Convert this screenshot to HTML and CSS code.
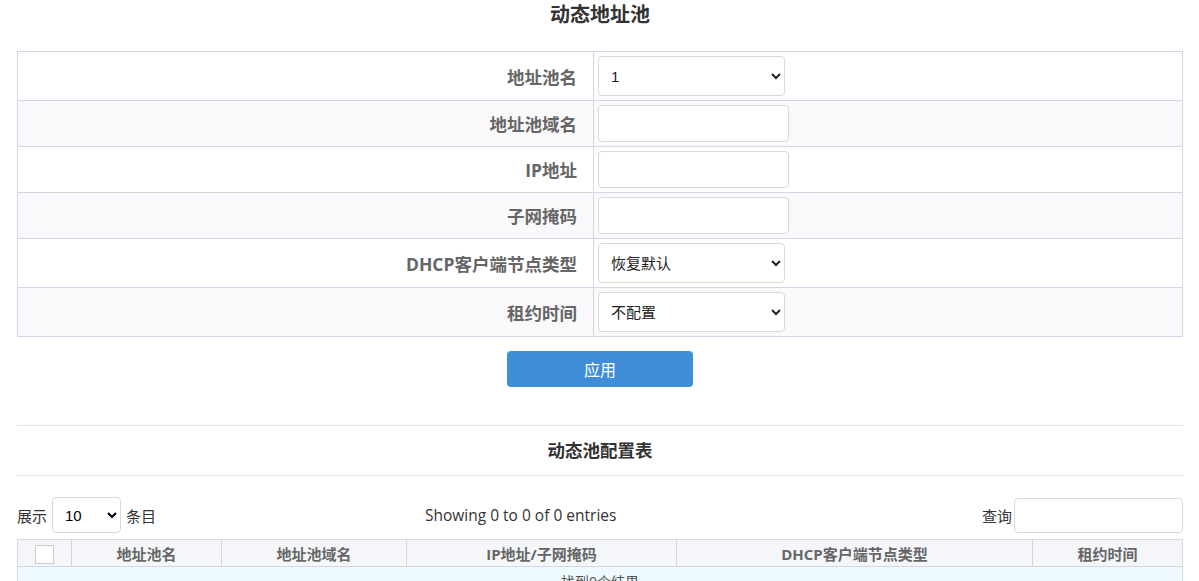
FILE: index.html
```html
<!DOCTYPE html>
<html lang="zh-CN">

<head>
  <meta charset="UTF-8">
  <title>动态地址池</title>
  <link rel="stylesheet" href="styles.css">
</head>

<body>
  <div class="page">
    <h2 class="title">动态地址池</h2>

    <table class="form-table">
      <colgroup>
        <col class="label-col">
        <col>
      </colgroup>
      <tr>
        <th>地址池名</th>
        <td>
          <select class="field field-select">
            <option>1</option>
          </select>
        </td>
      </tr>
      <tr>
        <th>地址池域名</th>
        <td><input class="field field-input" type="text"></td>
      </tr>
      <tr>
        <th>IP地址</th>
        <td><input class="field field-input" type="text"></td>
      </tr>
      <tr>
        <th>子网掩码</th>
        <td><input class="field field-input" type="text"></td>
      </tr>
      <tr>
        <th>DHCP客户端节点类型</th>
        <td>
          <select class="field field-select">
            <option>恢复默认</option>
          </select>
        </td>
      </tr>
      <tr>
        <th>租约时间</th>
        <td>
          <select class="field field-select">
            <option>不配置</option>
          </select>
        </td>
      </tr>
    </table>

    <div class="actions">
      <button class="btn-apply">应用</button>
    </div>

    <div class="section-head">动态池配置表</div>

    <div class="list-tools">
      <div class="length">
        展示
        <select class="len-select">
          <option>10</option>
        </select>
        条目
      </div>
      <div class="info">Showing 0 to 0 of 0 entries</div>
      <div class="search">
        查询<input class="search-input" type="text">
      </div>
    </div>

    <table class="list-table">
      <colgroup>
        <col style="width: 54px">
        <col style="width: 150px">
        <col style="width: 185px">
        <col style="width: 270px">
        <col style="width: 356px">
        <col>
      </colgroup>
      <thead>
        <tr>
          <th><span class="check"></span></th>
          <th>地址池名</th>
          <th>地址池域名</th>
          <th>IP地址/子网掩码</th>
          <th>DHCP客户端节点类型</th>
          <th>租约时间</th>
        </tr>
      </thead>
      <tbody>
        <tr>
          <td class="empty" colspan="6">找到0个结果</td>
        </tr>
      </tbody>
    </table>
  </div>
</body>

</html>
```

FILE: styles.css
```css
body {
  margin: 0;
  background: #fff;
  color: #333;
  font-family: "Open Sans", "Noto Sans CJK SC", sans-serif;
  font-size: 14px;
}

.page {
  padding: 0 16px 0 17px;
}

.title {
  margin: 0;
  padding-top: 1px;
  height: 50px;
  text-align: center;
  font-size: 20px;
  font-weight: bold;
  color: #333;
  line-height: 28px;
}

.form-table {
  width: 100%;
  border-collapse: collapse;
  table-layout: fixed;
}

.label-col {
  width: 576px;
}

.form-table th,
.form-table td {
  border: 1px solid #d3d6e4;
  padding: 4px 5px 4px 4px;
}

.form-table th {
  text-align: right;
  padding-right: 16px;
  font-size: 17.5px;
  font-weight: bold;
  color: #666;
}

.form-table tr:nth-child(even) {
  background: #f9f9fb;
}

.field {
  display: block;
  box-sizing: border-box;
  border: 1px solid #d9d9d9;
  border-radius: 4px;
  background: #fff;
  font-family: "Liberation Sans", "Noto Sans CJK SC", sans-serif;
  font-size: 15px;
  color: #222;
}

.field-select {
  width: 187px;
  height: 40px;
  padding: 0 8px;
}

.field-input {
  width: 191px;
  height: 37px;
}

.actions {
  margin-top: 14px;
  text-align: center;
}

.btn-apply {
  width: 186px;
  height: 36px;
  border: none;
  border-radius: 4px;
  background: #3e8dd6;
  color: #fff;
  font-family: "Noto Sans CJK SC", sans-serif;
  font-size: 16px;
  cursor: pointer;
}

.section-head {
  margin-top: 38px;
  border-top: 1px solid #e3e3e3;
  border-bottom: 1px solid #e3e3e3;
  height: 49px;
  line-height: 49px;
  text-align: center;
  font-size: 17.5px;
  font-weight: bold;
  color: #333;
}

.list-tools {
  margin-top: 21px;
  display: flex;
  align-items: center;
  height: 36px;
  font-size: 15px;
  color: #333;
}

.length {
  display: flex;
  align-items: center;
  gap: 5px;
  width: 408px;
}

.len-select {
  width: 69px;
  height: 36px;
  border: 1px solid #d9d9d9;
  border-radius: 4px;
  background: #fff;
  padding: 0 8px;
  font-family: "Liberation Sans", sans-serif;
  font-size: 15px;
}

.info {
  font-size: 15.5px;
}

.search {
  flex: 1;
  display: flex;
  justify-content: flex-end;
  align-items: center;
  gap: 2px;
}

.search-input {
  width: 169px;
  height: 35px;
  box-sizing: border-box;
  border: 1px solid #d9d9d9;
  border-radius: 4px;
}

.list-table {
  margin-top: 6px;
  width: 100%;
  border-collapse: collapse;
  table-layout: fixed;
}

.list-table th {
  height: 26px;
  padding: 0 8px;
  background: #f4f6fa;
  border: 1px solid #d3d6e4;
  font-size: 15px;
  font-weight: bold;
  color: #666;
  text-align: center;
}

.check {
  display: inline-block;
  width: 17px;
  height: 17px;
  border: 1px solid #ccc;
  background: #fff;
  vertical-align: middle;
}

.list-table td.empty {
  background: #eefafd;
  border: 1px solid #d3d6e4;
  text-align: center;
  padding: 4px 6px;
  color: #555;
}
```
